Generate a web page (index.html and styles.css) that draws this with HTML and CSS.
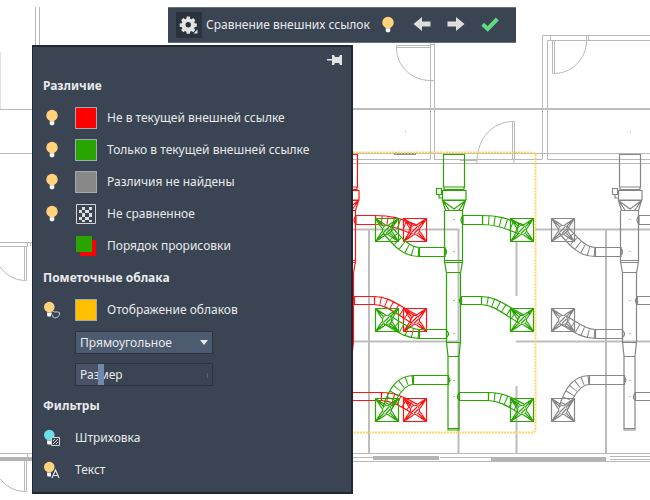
FILE: index.html
```html
<!DOCTYPE html>
<html lang="ru">
<head>
<meta charset="utf-8">
<meta name="viewport" content="width=device-width, initial-scale=1">
<title>Сравнение внешних ссылок</title>
<link rel="stylesheet" href="styles.css">
</head>
<body>
<svg class="defs" width="0" height="0" aria-hidden="true">
  <defs>
    <symbol id="bulb" viewBox="0 0 16 18">
      <circle cx="8" cy="6.5" r="5.700" fill="currentColor"/>
      <path d="M5 10h6l-.8 2.200H5.800z" fill="currentColor"/>
      <path d="M5.700 12.300h4.600v2.700l-1 1.200H6.700l-1-1.200z" fill="#fff"/>
    </symbol>
    <symbol id="bulb-small" viewBox="0 0 18 18">
      <circle cx="6.300" cy="6" r="5.300" fill="currentColor"/>
      <path d="M4 11.500h4v4H5l-1-1z" fill="#fff"/>
    </symbol>
    <g id="diffuser">
      <path d="M-11.500-11.500h23v23h-23z"/>
      <circle r="4.500"/>
      <path d="M-11.500-11.500L-1.500-5M-11.500-11.500L-5-1.500M-11.500-11.500L-3.500-3.500M11.500-11.500L1.500-5M11.500-11.500L5-1.500M11.500-11.500L3.500-3.500M-11.500 11.500L-1.500 5M-11.500 11.500L-5 1.500M-11.500 11.500L-3.500 3.500M11.500 11.500L1.500 5M11.500 11.500L5 1.500M11.500 11.500L3.500 3.500M-3 2L2-3M-1 3.500L3.500-1"/>
    </g>
    <g id="riser" fill="none" stroke="currentColor" stroke-width="1.200">
      <!-- vertical trunk -->
      <path d="M443.500 154.500h21v32.500h-21zM443.500 189.500h21M444 187v3M464 187v3M442.500 190.500h23.500v9.500h-23.500zM436.500 188.500h5v6h-5zM439 194.500v3.500h3M442.500 200.500h23l-3 10h-17zM443 201l11 8 11-8M443 201l6 9M465 201l-6 9M444.500 210.500v51l2 11.500v69l1.500 14v74h11v-74l1.500-14v-69l2-11.500v-51M444.500 260.500h18M444.500 262.500h18M446.500 272.500h14M446.500 342.500h14M448 356.500h11M448 428.500h11M453.500 219.500h1M453.500 251.500h1M453.500 300.500h1M453.500 333.500h1M453.500 380.500h1M453.500 396.500h1"/>
      <!-- rigid branches -->
      <path d="M482.500 215.500h-19.500v9h19.500zM462.500 216q-3 4 0 8M481.500 296.500h-20v8h20zM461 297q-3 4 0 7M488.500 392.500h-29v8h29zM459 393q-3 4 0 7M419.500 247.500h25.500v9h-25.500zM445 248q3 4 0 7M419.500 329.500h27v9h-27zM447 331q3 3 0 6M413.500 375.500h35v9h-35zM448 377q4 3 0 6"/>
      <!-- flexible branches -->
      <path d="M482 215.500c18 0 26 3.500 42 9.500M482 224.500c13 0 23 3.500 37 9.500M481 296.500c15 0 24 8.500 43 18.500M481 304.500c13 .5 21 8.500 38 18.500M488 392.500c17 .5 22 4.500 36 11.500M488 400.500c12 .5 19 5.500 31 12.500M419 247.500c-11-1-19-11.500-28-21.500M419 256.500c-16 0-25-10.500-36-23.500M419 329.500c-11-.5-19-8.500-29-13.500M419 338.500c-16-.5-25-9.500-35-14.500M413 375.500c-16 .5-24 12.500-30 31.500M413 384.500c-9 .5-16 11.500-22 26.500"/>
      <g stroke-width="9" stroke-dasharray="1 5">
        <path d="M482 220c16 0 24 3.500 38 9M481 300.500c14 0 23 8.500 40 18.500M488 396.500c15 .5 20 5 33 12M419 252c-14-.5-22-11-31-22M419 334c-14-.5-22-9-32-14M413 380c-13 .5-20 12-26 29"/>
      </g>
      <use href="#diffuser" x="387" y="230"/>
      <use href="#diffuser" x="387" y="320"/>
      <use href="#diffuser" x="387" y="410"/>
      <use href="#diffuser" x="522" y="230"/>
      <use href="#diffuser" x="522" y="320"/>
      <use href="#diffuser" x="522" y="410"/>
    </g>
  </defs>
</svg>

<main class="workspace">
  <svg class="plan" viewBox="0 0 650 500" preserveAspectRatio="xMinYMin slice" role="img" aria-label="План вентиляции">
    <g class="walls">
      <path d="M35.500 7v40M39.500 7v40M0 109.500h32M0 153.500h32M0 242.500h32M0 246.500h28M27.500 242v4M30.500 242v4M24.500 247v33.500h2V247M0 267q10 13 24 13.500M0 453.500h32M27.500 453v5M24.500 460v31.500h2V460M0 479q10 12 24 12.500"/>
      <path d="M430.500 42v117.500M434.500 42v117.500M430 44.500h4M430 80.500h4M430 45.500h-33.500v2H430M396.500 48c0 18 15 32.500 34 32.500"/>
      <path d="M542.500 159.500v-124H650M547.500 159.500V40.500H650M550.500 36v4M552.500 40v33.500h2V40M554 73.500c18 0 32.500-15 32.500-33M586.500 36v4M588.500 36v4"/>
      <path d="M512.500 160v-38.500h2V160M512 121.500c-20 1-34 17-35 38M460 160.500h17v3M514 160v3"/>
      <path d="M353 153.500h297M353 159.500h77M434 159.500h108M547 159.500h103M353 163.500h297"/>
      <path d="M405 131.500h1M630 131.500h1M353 453.500h297M353 461.500h297M353 457.500h20M440 457.500h51M610 456.500h40M610 459.500h40"/>
    </g>
    <path class="faint" d="M.5 52v57"/>
    <path class="beam" d="M353 109h297M353 229.500h106M535 229.500h115M353 341.500h106M516 341.500h134M369 229v224M458.500 229v224M516.500 242v54M516.500 386v67M606 229v224"/>
    <path class="slab" d="M0 459h32M373 458h66M491 459h115"/>
    <path class="sill" d="M394 154h22"/>
    <path class="cloud" d="M353 152.500h179q3.500 0 3.500 4v272q0 4-3.500 4H353"/>
    <use class="unchanged" href="#riser" x="176"/>
    <use class="removed" href="#riser" x="-107"/>
    <use class="added" href="#riser"/>
  </svg>

  <header class="toolbar">
    <button class="tool settings" type="button" aria-label="Настройки">
      <svg width="26" height="26" viewBox="0 0 26 26" fill="#e2e2e2">
        <path fill-rule="evenodd" d="M10.800 4h3.400l.4 2.300 1.500.6L18 5.600 20.400 8l-1.300 1.900.6 1.500 2.300.4v3.400l-2.300.4-.6 1.500 1.300 1.900-2.400 2.400-1.900-1.300-1.500.6-.4 2.300h-3.400l-.4-2.300-1.500-.6L7 21.400 4.600 19l1.300-1.900-.6-1.500-2.300-.4v-3.400l2.300-.4.6-1.500L4.600 8 7 5.600l1.900 1.300 1.500-.6zM12.500 10a3 3 0 100 6 3 3 0 000-6z" transform="translate(1 1) scale(.9)"/>
        <path d="M21.500 17.500v4h-4z"/>
      </svg>
    </button>
    <h1 class="title">Сравнение внешних ссылок</h1>
    <button class="tool" type="button" aria-label="Показать различия"><svg class="lit" width="16" height="18"><use href="#bulb"/></svg></button>
    <button class="tool" type="button" aria-label="Предыдущее"><svg width="18" height="16" viewBox="0 0 18 16"><path fill="#dedede" d="M.5 7L9 0v4.500h8.500v5H9V14z"/></svg></button>
    <button class="tool" type="button" aria-label="Следующее"><svg width="18" height="16" viewBox="0 0 18 16"><path fill="#dedede" d="M17.500 7L9 0v4.500H.5v5H9V14z"/></svg></button>
    <button class="tool" type="button" aria-label="Принять"><svg width="18" height="16" viewBox="0 0 18 16"><path fill="none" stroke="#5fdc83" stroke-width="4" d="M1.700 7.300l5 4.700L16.300 2"/></svg></button>
  </header>

  <section class="palette" aria-label="Параметры сравнения">
    <div class="grip">
      <button class="pin" type="button" aria-label="Закрепить">
        <svg width="16" height="12" viewBox="0 0 16 12"><path fill="#e2e2e2" d="M0 5h5v1.500H0zM5 1h2l1 2h4l1-2h2v10h-2l-1-2H8l-1 2H5z"/></svg>
      </button>
    </div>

    <h2 class="heading">Различие</h2>
    <div class="row">
      <button class="toggle" type="button" aria-label="Видимость"><svg class="lit" width="16" height="18"><use href="#bulb"/></svg></button>
      <button class="swatch red" type="button" aria-labelledby="l1"></button>
      <span id="l1">Не в текущей внешней ссылке</span>
    </div>
    <div class="row">
      <button class="toggle" type="button" aria-label="Видимость"><svg class="lit" width="16" height="18"><use href="#bulb"/></svg></button>
      <button class="swatch green" type="button" aria-labelledby="l2"></button>
      <span id="l2">Только в текущей внешней ссылке</span>
    </div>
    <div class="row">
      <button class="toggle" type="button" aria-label="Видимость"><svg class="lit" width="16" height="18"><use href="#bulb"/></svg></button>
      <button class="swatch gray" type="button" aria-labelledby="l3"></button>
      <span id="l3">Различия не найдены</span>
    </div>
    <div class="row">
      <button class="toggle" type="button" aria-label="Видимость"><svg class="lit" width="16" height="18"><use href="#bulb"/></svg></button>
      <button class="swatch plain" type="button" aria-labelledby="l4">
        <svg width="20" height="20" viewBox="0 0 20 20"><path fill="none" stroke="#d4d7da" d="M.5.5h19v19H.5z"/><path fill="#dcdedf" d="M6 3h3v3H6zM13 3h3v3h-3zM3 6h3v3H3zM9 6h4v3H9zM6 9h3v4H6zM13 9h3v4h-3zM3 13h3v3H3zM9 13h4v3H9zM6 16h3v2H6zM13 16h3v2h-3z"/></svg>
      </button>
      <span id="l4">Не сравненное</span>
    </div>
    <div class="row">
      <span></span>
      <button class="swatch plain" type="button" aria-labelledby="l5">
        <svg width="20" height="20" viewBox="0 0 20 20"><path fill="#f00" d="M4 4h16v16H4z"/><path fill="#28a500" d="M0 0h16v16H0z"/></svg>
      </button>
      <span id="l5">Порядок прорисовки</span>
    </div>

    <h2 class="heading">Пометочные облака</h2>
    <div class="row">
      <button class="toggle" type="button" aria-label="Видимость облаков">
        <svg class="lit" width="18" height="18" viewBox="0 0 18 18"><use href="#bulb-small"/><path fill="#3b4453" stroke="#c8ccd0" d="M8 11.500q1.500-2.500 3.500-.5 3-.5 5 .5 1 3-2 4.500-4 2-5-1z"/></svg>
      </button>
      <button class="swatch amber" type="button" aria-labelledby="l6"></button>
      <span id="l6">Отображение облаков</span>
    </div>
    <div class="row">
      <div class="field picker">
        <select aria-label="Форма облака"><option>Прямоугольное</option><option>Многоугольное</option></select>
        <svg class="caret" width="8" height="5" viewBox="0 0 8 5"><path fill="#e4e6e9" d="M0 0h8L4 5z"/></svg>
      </div>
    </div>
    <div class="row">
      <div class="field slider">
        <label for="size">Размер</label>
        <input id="size" type="range" min="0" max="100" value="17">
      </div>
    </div>

    <h2 class="heading">Фильтры</h2>
    <div class="row filter">
      <button class="toggle" type="button" aria-labelledby="l7">
        <svg class="dim" width="18" height="18" viewBox="0 0 18 18"><use href="#bulb-small"/><path fill="#3b4453" stroke="#d4d7da" d="M8.500 8.500h8v8h-8z"/><path fill="none" stroke="#d4d7da" d="M10 15l5-5M10 12l2-2M13 15l2-2"/></svg>
      </button>
      <span id="l7">Штриховка</span>
    </div>
    <div class="row filter">
      <button class="toggle" type="button" aria-labelledby="l8">
        <svg class="lit" width="18" height="18" viewBox="0 0 18 18"><use href="#bulb-small"/><path fill="none" stroke="#3b4453" stroke-width="3" d="M9 17l3.500-8 3.500 8"/><path fill="none" stroke="#e0e2e4" stroke-width="1.200" d="M9 17l3.500-8 3.500 8M10.300 14.500h4.400"/></svg>
      </button>
      <span id="l8">Текст</span>
    </div>
  </section>
</main>
</body>
</html>
```
FILE: styles.css
```css
* {
  box-sizing: border-box;
}

body {
  margin: 0;
  background: #fff;
  color: #e8eaec;
  font: 12px/20px "Noto Sans", "Open Sans", sans-serif;
}

button {
  padding: 0;
  border: 0;
  background: none;
  color: inherit;
}

svg {
  display: block;
}

.defs {
  position: absolute;
}

.workspace {
  position: relative;
  min-height: 100vh;
  overflow: hidden;
}

/* Floor plan under the floating windows */
.plan {
  position: absolute;
  inset: 0;
  width: 100%;
  height: 100%;
}

.plan path {
  fill: none;
}

.walls { stroke: #b9b9b9; }
.faint { stroke: #e2e2e2; }
.beam { stroke: #bdbdbd; stroke-width: 2; }
.slab { stroke: #b4b4b4; stroke-width: 4; }
.sill { stroke: #959595; stroke-width: 2; }
.cloud { stroke: #ffd466; stroke-width: 2; stroke-dasharray: 2 1; }
.unchanged { color: #868686; }
.removed { color: #ff1414; }
.added { color: #28a500; }

/* Floating toolbar */
.toolbar {
  position: absolute;
  top: 7px;
  left: 168px;
  display: flex;
  align-items: center;
  gap: 8px;
  padding: 4px 13px 4px 8px;
  border: solid #677081;
  border-width: 1px 0;
  background: #3b4453;
}

.tool {
  display: grid;
  place-items: center;
  width: 26px;
  height: 26px;
}

.settings {
  background: #29323d;
}

.title {
  width: 165px;
  margin: 0 -4px;
  font-size: 12px;
  font-weight: 400;
  white-space: nowrap;
}

.lit { color: #ffd27c; }
.dim { color: #6edde8; }

/* Floating palette */
.palette {
  position: absolute;
  top: 45px;
  left: 32px;
  width: 321px;
  padding: 0 8px 6px 10px;
  border: 1px solid #1f2833;
  border-width: 2px 2px 2px 1px;
  background: #3b4453;
}

.grip {
  display: flex;
  justify-content: flex-end;
  height: 23px;
  padding-top: 7px;
}

.pin {
  height: 12px;
}

.heading,
.row {
  height: 32px;
  line-height: 32px;
}

.heading {
  margin: 0;
  font-size: 12px;
  font-weight: 700;
}

.row {
  display: grid;
  grid-template-columns: 18px 22px 1fr;
  column-gap: 14px;
  align-items: center;
}

.row > span {
  margin-left: -4px;
}

.filter {
  grid-template-columns: 18px 1fr;
}

.filter > span {
  margin-left: 0;
}

.toggle {
  display: grid;
  place-items: center;
  height: 18px;
}

.swatch {
  display: grid;
  place-items: center;
  height: 22px;
  border: 1px solid #a3a8af;
}

.plain { border: 0; }
.red { background: #f00; }
.green { background: #28a500; }
.gray { background: #888; }
.amber { background: #ffbf00; }

.field {
  grid-column: 2 / -1;
  position: relative;
  width: 138px;
  height: 23px;
  border: 1px solid #2b3440;
  line-height: 21px;
}

.picker {
  background: #4d5b70;
}

.picker select {
  width: 100%;
  height: 21px;
  padding: 0 20px 0 4px;
  border: 0;
  appearance: none;
  background: none;
  color: inherit;
  font: inherit;
}

.caret {
  position: absolute;
  top: 8px;
  right: 4px;
  pointer-events: none;
}

.slider {
  display: grid;
  background: linear-gradient(90deg, #485365 17%, #3b4453 17%);
}

.slider label,
.slider input {
  grid-area: 1 / 1;
}

.slider label {
  padding-left: 4px;
}

.slider input {
  position: relative;
  width: 100%;
  height: 21px;
  margin: 0;
  appearance: none;
  background: linear-gradient(#566174, #566174) 131px 9px / 1px 5px no-repeat;
}

.slider input::-webkit-slider-thumb {
  appearance: none;
  width: 6px;
  height: 21px;
  background: #7488ab;
}
```
